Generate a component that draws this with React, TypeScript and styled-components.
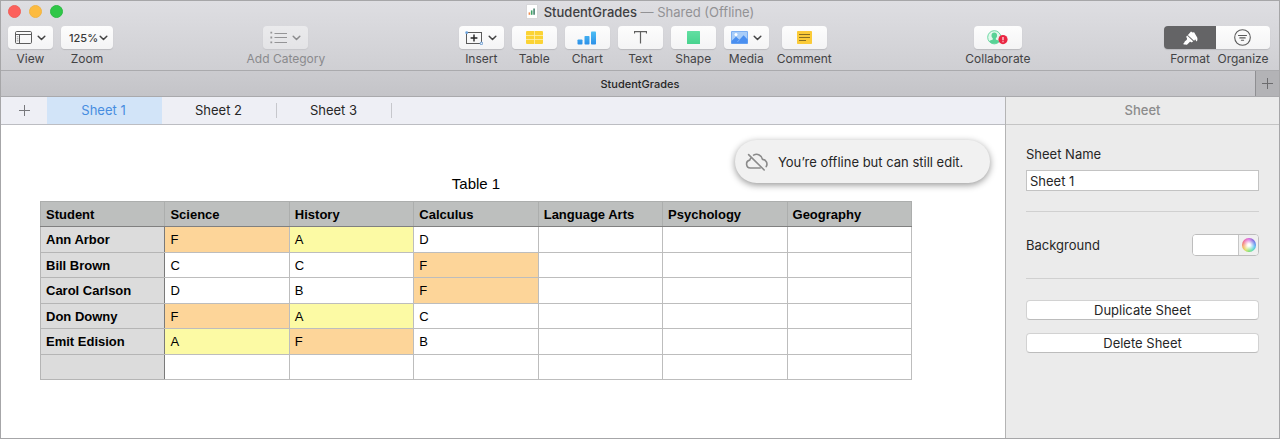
import React from "react";
import styled, { createGlobalStyle } from "styled-components";

const GlobalStyle = createGlobalStyle`
  *, *::before, *::after { box-sizing: border-box; }
  body { margin: 0; background: #fff; }
  button, input, select { font: inherit; color: inherit; margin: 0; }
  button { cursor: pointer; }
`;

const Window = styled.div`
  display: flex;
  flex-direction: column;
  min-height: 100vh;
  border: 1px solid #a6a6a8;
  background: #fff;
  color: #262626;
  font: 13px/16px Inter, "Liberation Sans", sans-serif;
`;

/* ---------- title bar and toolbar ---------- */

const Header = styled.header`
  background: linear-gradient(#dedee2, #cfcfd3);
  border-bottom: 1px solid #aaaaad;
`;

const TitleBar = styled.div`
  display: grid;
  grid-template-columns: 1fr auto 1fr;
  align-items: center;
  height: 21px;
  padding: 0 7px;
`;

const Lights = styled.div`
  display: flex;
  gap: 8px;
`;

const Light = styled.button<{ $color: string; $edge: string }>`
  width: 13px;
  height: 13px;
  padding: 0;
  border: 1px solid ${(p) => p.$edge};
  border-radius: 50%;
  background: ${(p) => p.$color};
`;

const Title = styled.h1`
  display: flex;
  align-items: center;
  gap: 6px;
  margin: 0;
  font-size: 13px;
  font-weight: 500;
  color: #404042;
`;

const TitleStatus = styled.span`
  font-weight: 400;
  color: #929295;
`;

const Toolbar = styled.div`
  display: flex;
  justify-content: space-between;
  padding: 4px 9px 3px 7px;
`;

const ToolGroup = styled.div`
  display: flex;
  gap: 8px;
`;

const ToolItem = styled.div<{ $dim?: boolean }>`
  display: flex;
  flex-direction: column;
  align-items: center;
  gap: 2px;
  opacity: ${(p) => (p.$dim ? 0.5 : 1)};
`;

const ToolButton = styled.button<{ $width?: number }>`
  display: flex;
  align-items: center;
  justify-content: center;
  gap: 5px;
  width: ${(p) => p.$width ?? 45}px;
  height: 23px;
  padding: 0;
  border: 0;
  border-radius: 4px;
  background: linear-gradient(#fdfdfd, #f4f4f5);
  box-shadow: 0 1px 1px rgba(0, 0, 0, 0.12);
`;

const ToolLabel = styled.label`
  font-size: 12px;
  line-height: 16px;
  color: #434345;
  white-space: nowrap;
`;

const ZoomBox = styled.div`
  display: grid;
  grid-template-columns: 1fr 9px;
  align-items: center;
  width: 52px;
  height: 23px;
  padding-right: 5px;
  border-radius: 4px;
  background: linear-gradient(#fdfdfd, #f4f4f5);
  box-shadow: 0 1px 1px rgba(0, 0, 0, 0.12);
`;

const ZoomSelect = styled.select`
  appearance: none;
  grid-area: 1 / 1 / 2 / 3;
  height: 23px;
  padding: 0 0 0 8px;
  border: 0;
  background: transparent;
  font-size: 11px;
  font-weight: 500;
  color: #383838;
`;

const ZoomChevron = styled.span`
  grid-area: 1 / 2;
  display: flex;
  pointer-events: none;
`;

const Segmented = styled.div`
  display: grid;
  grid-template-columns: 52px 54px;
`;

const Segment = styled(ToolButton)<{ $active?: boolean }>`
  width: 100%;
  background: ${(p) => (p.$active ? "#646466" : "linear-gradient(#fdfdfd, #f4f4f5)")};
  border-radius: ${(p) => (p.$active ? "4px 0 0 4px" : "0 4px 4px 0")};
`;

/* ---------- document tabs ---------- */

const DocumentTabs = styled.nav`
  display: flex;
  height: 26px;
  border-bottom: 1px solid #a9a9ac;
  background: linear-gradient(#cbcbcf, #c4c4c8);
`;

const DocumentTab = styled.button`
  flex: 1;
  padding: 0 0 0 24px;
  border: 0;
  background: transparent;
  font-size: 11px;
  font-weight: 500;
  color: #262626;
`;

const AddDocument = styled.button`
  display: flex;
  align-items: center;
  justify-content: center;
  width: 24px;
  padding: 0;
  border: 0;
  border-left: 1px solid #8f8f92;
  background: #b3b3b6;
`;

/* ---------- body ---------- */

const Body = styled.div`
  display: flex;
  flex: 1;
`;

const Main = styled.main`
  flex: 1;
  min-width: 0;
  display: flex;
  flex-direction: column;
`;

const SheetTabs = styled.nav`
  display: flex;
  align-items: stretch;
  height: 28px;
  border-bottom: 1px solid #bcbdc2;
  background: #eeeff5;
`;

const AddSheet = styled.button`
  display: flex;
  align-items: center;
  justify-content: center;
  width: 46px;
  padding: 0;
  border: 0;
  background: transparent;
`;

const SheetTab = styled.button<{ $active?: boolean }>`
  width: 115px;
  padding: 0 2px 1px 0;
  border: 0;
  background: ${(p) => (p.$active ? "#d2e4f8" : "transparent")};
  color: ${(p) => (p.$active ? "#478de0" : "#262626")};
`;

const TabDivider = styled.span`
  align-self: center;
  width: 1px;
  height: 15px;
  margin-left: -1px;
  background: #c6c7cc;
`;

const Canvas = styled.section`
  position: relative;
  flex: 1;
  padding: 49px 93px 16px 39px;
  background: #fff;
  color: #000;
  font-family: "Liberation Sans", Arial, sans-serif;
`;

const Toast = styled.div`
  position: absolute;
  top: 15px;
  right: 15px;
  display: flex;
  align-items: center;
  gap: 9px;
  width: 255px;
  height: 43px;
  padding-left: 10px;
  border-radius: 22px;
  background: #f1f1f1;
  box-shadow: 0 2px 7px rgba(0, 0, 0, 0.42);
  color: #262626;
  font-family: Inter, "Liberation Sans", sans-serif;
  white-space: nowrap;
`;

const Grades = styled.table`
  width: 100%;
  table-layout: fixed;
  border-collapse: collapse;
  line-height: 16px;

  caption {
    padding-bottom: 8px;
    font-size: 15px;
    line-height: 19px;
  }
  tbody tr:nth-child(odd) { height: 26px; }
  tbody tr:nth-child(even) { height: 25px; }
`;

const ColumnHead = styled.th`
  height: 25px;
  padding: 1px 5px 0;
  border: 1px solid #acaead;
  border-bottom-color: #808080;
  background: #bdbfbe;
  text-align: left;
`;

const RowHead = styled.th`
  padding: 1px 5px 0;
  border: 1px solid #b5b5b5;
  border-right-color: #7a7a7a;
  background: #dcdcdc;
  text-align: left;
`;

const fills: Record<string, string> = { F: "#fdd599", A: "#fcfaa4" };

const Cell = styled.td<{ $grade: string }>`
  padding: 1px 5px 0;
  border: 1px solid #bdbdbd;
  background: ${(p) => fills[p.$grade] ?? "#fff"};
`;

/* ---------- inspector ---------- */

const Inspector = styled.aside`
  width: 274px;
  border-left: 1px solid #b4b4b4;
  background: #ebebeb;
`;

const InspectorTitle = styled.h2`
  height: 28px;
  margin: 0;
  border-bottom: 1px solid #c4c4c4;
  font-size: 13px;
  font-weight: 500;
  line-height: 26px;
  text-align: center;
  color: #8c8c8c;
`;

const InspectorBody = styled.div`
  padding: 21px 20px 20px;
`;

const Field = styled.div`
  display: flex;
  flex-direction: column;
  gap: 8px;
  padding-bottom: 20px;
  border-bottom: 1px solid #d0d0d0;
`;

const NameInput = styled.input`
  width: 100%;
  height: 21px;
  padding: 0 3px;
  border: 1px solid #c3c3c3;
  border-radius: 0;
  background: #fff;
`;

const BackgroundRow = styled.div`
  display: flex;
  align-items: center;
  justify-content: space-between;
  padding: 22px 0;
  border-bottom: 1px solid #d0d0d0;
`;

const ColorWell = styled.div`
  display: grid;
  grid-template-columns: 45px 20px;
  height: 22px;
  border: 1px solid #bdbdbd;
  border-radius: 4px;
  background: #fff;
  overflow: hidden;
`;

const ColorInput = styled.input`
  appearance: none;
  width: 100%;
  height: 100%;
  padding: 0;
  border: 0;
  background: #fff;
  &::-webkit-color-swatch-wrapper { padding: 0; }
  &::-webkit-color-swatch { border: 0; }
`;

const WheelButton = styled.button`
  display: grid;
  place-items: center;
  padding: 0;
  border: 0;
  border-left: 1px solid #c6c6c6;
  background: #f0f0f0;
`;

const Wheel = styled.span`
  width: 14px;
  height: 14px;
  border-radius: 50%;
  background:
    radial-gradient(#fff 12%, rgba(255, 255, 255, 0) 72%),
    conic-gradient(#d058d8, #7a55d8, #5078e8, #45b8f0, #4ad8b0, #70dc60, #d8dc50, #f4a850, #f06868, #e85cb0, #d058d8);
`;

const Actions = styled.div`
  display: flex;
  flex-direction: column;
  gap: 13px;
  padding-top: 21px;
`;

const ActionButton = styled.button`
  height: 20px;
  padding: 0;
  border: 1px solid #d2d2d2;
  border-bottom-color: #bcbcbc;
  border-radius: 4px;
  background: #fff;
  line-height: 18px;
`;

/* ---------- icons ---------- */

const Chevron = () => (
  <svg width="9" height="6" viewBox="0 0 9 6" fill="none" stroke="#444" strokeWidth="1.5" strokeLinecap="round" strokeLinejoin="round">
    <path d="M1.2 1.2 4.5 4.5 7.8 1.2" />
  </svg>
);

const Plus = ({ size, color }: { size: number; color: string }) => (
  <svg width={size} height={size} viewBox="0 0 11 11" stroke={color} strokeWidth="1">
    <path d="M5.5 0v11M0 5.5h11" />
  </svg>
);

const DocIcon = () => (
  <svg width="12" height="15" viewBox="0 0 12 15">
    <rect x=".5" y=".5" width="11" height="14" rx="1" fill="#fff" stroke="#c8c8ca" strokeWidth=".6" />
    <path d="M2.6 8.4h1.6v2.4H2.6z" fill="#ee8a4c" />
    <path d="M4.9 6.4h1.6v4.4H4.9z" fill="#3ea568" />
    <path d="M7.2 4.6h1.8v6.2H7.2z" fill="#5b8f7e" />
  </svg>
);

const ViewIcon = () => (
  <svg width="17" height="13" viewBox="0 0 17 13" fill="none" stroke="#5c5c5c" strokeWidth="1">
    <rect x=".5" y=".5" width="16" height="12" rx="1.2" />
    <path d="M.5 3.5h16M4.5 3.5v9" />
    <path d="M1.8 5.8h1.6M1.8 7.8h1.6M1.8 9.8h1.6" strokeWidth=".6" />
  </svg>
);

const CategoryIcon = () => (
  <svg width="17" height="13" viewBox="0 0 17 13" fill="none" stroke="#555" strokeWidth="1">
    <path d="M4.5 2.5H17M4.5 6.5H17M4.5 11.5H17" />
    <path d="M.4.8h1.8v1.8H.4zM.4 5.6h1.8v1.8H.4zM.4 10.4h1.8v1.8H.4z" fill="#555" stroke="none" />
  </svg>
);

const InsertIcon = () => (
  <svg width="18" height="14" viewBox="0 0 18 14" fill="none">
    <rect x="1.5" y="1.5" width="15" height="11" stroke="#5a5a5a" strokeWidth="1" />
    <path d="M9 3.6v6.8M5.6 7h6.8" stroke="#222" strokeWidth="1.4" />
    <circle cx="1.7" cy="1.7" r="1.4" fill="#6aa2dc" />
    <circle cx="16.4" cy="12.4" r="1.3" fill="#e8f2fc" stroke="#5a8fca" strokeWidth=".9" />
  </svg>
);

const TableIcon = () => (
  <svg width="17" height="13" viewBox="0 0 17 13">
    <rect width="17" height="13" rx="1" fill="#fbd334" />
    <path d="M0 4.5h17M0 8.5h17M8.5 0v13" stroke="#fdf0b4" strokeWidth=".8" />
  </svg>
);

const ChartIcon = () => (
  <svg width="20" height="14" viewBox="0 0 20 14">
    <defs>
      <linearGradient id="bars" x1="0" y1="0" x2="0" y2="14" gradientUnits="userSpaceOnUse">
        <stop offset="0" stopColor="#4fc0f4" />
        <stop offset="1" stopColor="#2a8ee8" />
      </linearGradient>
    </defs>
    <g fill="url(#bars)">
      <rect x=".5" y="8.5" width="5" height="5" rx=".8" />
      <rect x="7.5" y="5" width="5" height="8.5" rx=".8" />
      <rect x="14" y=".5" width="5" height="13" rx=".8" />
    </g>
  </svg>
);

const TextIcon = () => (
  <svg width="13" height="13" viewBox="0 0 13 13" fill="none" stroke="#606060" strokeWidth="1.2">
    <path d="M.5 2.5V.6h12v1.9M6.5.6v12" />
  </svg>
);

const ShapeIcon = () => (
  <svg width="13" height="13" viewBox="0 0 13 13">
    <defs>
      <linearGradient id="square" x1="0" y1="0" x2="0" y2="1">
        <stop offset="0" stopColor="#62dfa2" />
        <stop offset="1" stopColor="#48d38e" />
      </linearGradient>
    </defs>
    <rect width="13" height="13" rx=".5" fill="url(#square)" />
  </svg>
);

const MediaIcon = () => (
  <svg width="17" height="13" viewBox="0 0 17 13">
    <rect x=".4" y=".4" width="16.2" height="12.2" rx=".6" fill="#a9cdf8" stroke="#5c9cf0" strokeWidth=".8" />
    <path d="M.5 10 5 5.8l3.4 3 4.2-4.6 4 4.3v4H.5z" fill="#4a8ff0" />
    <path d="m8.4 8.8-2 2.2" stroke="#8dbaf6" strokeWidth=".8" />
    <circle cx="5" cy="3.6" r="1.5" fill="#fff" />
  </svg>
);

const CommentIcon = () => (
  <svg width="15" height="13" viewBox="0 0 15 13">
    <rect width="15" height="13" rx=".8" fill="#fbcb38" />
    <path d="M2 3.5h11M2 6.5h11M2 9.5h7" stroke="#7a6420" strokeWidth=".9" />
  </svg>
);

const CollaborateIcon = () => (
  <svg width="21" height="15" viewBox="0 0 21 15">
    <circle cx="7.3" cy="7.3" r="6.6" fill="#e2f8ec" stroke="#6ad8a2" strokeWidth="1" />
    <path d="M7.3 2.6c1.7 0 2.8 1.2 2.8 3 0 1.3-.6 2.2-1.3 2.9v1c1.5.5 3 1 3.5 2a6.6 6.6 0 0 1-10 0c.5-1 2-1.5 3.5-2v-1c-.7-.7-1.3-1.6-1.3-2.9 0-1.8 1.1-3 2.8-3z" fill="#58d296" />
    <circle cx="16" cy="9.6" r="4.6" fill="#ea2743" />
    <path d="M16 7v3.2M16 11.2v1.1" stroke="#fff" strokeWidth="1.1" />
  </svg>
);

const FormatIcon = () => (
  <svg width="16" height="16" viewBox="0 0 16 16" fill="#fff">
    <path d="M6.4 4.4 9 1.4l1.5 1 1.6-.1 3.1 5.2c.4 1 .3 3-.3 3.7-.5.4-1-.1-1.1-.9-.1-.7-.6-.9-1.1-.4l-.6.8L5.8 5.1z" />
    <path d="m5.100 5.600 6 5.600-1.300 1.300c-.8-.7-1.700-.9-2.300-.3l-2.300 2.300c-.7.6-1.400.1-1.700-.1-.9.2-1.700.2-2-.2-.4-.5.2-1 .8-1.400-.1-.7.2-1.200.7-1.600l1.600-1.300c.7-.6.6-1.700-.5-2.900z" />
  </svg>
);

const OrganizeIcon = () => (
  <svg width="17" height="17" viewBox="0 0 17 17" fill="none" stroke="#5a5a5a" strokeWidth="1.1" strokeLinecap="round">
    <circle cx="8.5" cy="8.5" r="7.8" />
    <path d="M4.5 6.5h8M5.8 8.9h5.4M7.4 11.3h2.2" />
  </svg>
);

const OfflineIcon = () => (
  <svg width="24" height="20" viewBox="0 0 24 20" fill="none" stroke="#8a8a8a" strokeWidth="1.6" strokeLinecap="round" strokeLinejoin="round">
    <path d="M15.2 16H5.4a4 4 0 0 1-.7-7.9c.3-.8.7-1.5 1.3-2.1" />
    <path d="M8.600 3.100a6 6 0 0 1 8.900 4.300 4.700 4.700 0 0 1 3.700 7.200" />
    <path d="m3.600 2.600 15.600 15.400" />
  </svg>
);

/* ---------- data ---------- */

const subjects = ["Science", "History", "Calculus", "Language Arts", "Psychology", "Geography"];

const students = [
  { name: "Ann Arbor", grades: ["F", "A", "D"] },
  { name: "Bill Brown", grades: ["C", "C", "F"] },
  { name: "Carol Carlson", grades: ["D", "B", "F"] },
  { name: "Don Downy", grades: ["F", "A", "C"] },
  { name: "Emit Edision", grades: ["A", "F", "B"] },
  { name: "", grades: [] },
];

interface ToolProps {
  name: string;
  icon: React.ReactNode;
  menu?: boolean;
  dim?: boolean;
  width?: number;
}

const Tool = ({ name, icon, menu, dim, width }: ToolProps) => {
  const id = `tool-${name.toLowerCase().replace(" ", "-")}`;
  return (
    <ToolItem $dim={dim}>
      <ToolButton id={id} type="button" disabled={dim} $width={width} aria-haspopup={menu ? "menu" : undefined}>
        {icon}
        {menu && <Chevron />}
      </ToolButton>
      <ToolLabel htmlFor={id}>{name}</ToolLabel>
    </ToolItem>
  );
};

export default function App() {
  return (
    <>
      <GlobalStyle />
      <Window>
        <Header>
          <TitleBar>
            <Lights>
              <Light type="button" aria-label="Close" $color="#fc605c" $edge="#f0605a" />
              <Light type="button" aria-label="Minimize" $color="#fcbb40" $edge="#f0b445" />
              <Light type="button" aria-label="Full screen" $color="#2fc748" $edge="#2dbb45" />
            </Lights>
            <Title>
              <DocIcon />
              <span>
                StudentGrades <TitleStatus>— Shared (Offline)</TitleStatus>
              </span>
            </Title>
          </TitleBar>
          <Toolbar>
            <ToolGroup>
              <Tool name="View" icon={<ViewIcon />} menu />
              <ToolItem>
                <ZoomBox>
                  <ZoomSelect id="zoom" defaultValue="125%">
                    <option>125%</option>
                  </ZoomSelect>
                  <ZoomChevron>
                    <Chevron />
                  </ZoomChevron>
                </ZoomBox>
                <ToolLabel htmlFor="zoom">Zoom</ToolLabel>
              </ToolItem>
            </ToolGroup>
            <Tool name="Add Category" icon={<CategoryIcon />} menu dim />
            <ToolGroup>
              <Tool name="Insert" icon={<InsertIcon />} menu />
              <Tool name="Table" icon={<TableIcon />} />
              <Tool name="Chart" icon={<ChartIcon />} />
              <Tool name="Text" icon={<TextIcon />} />
              <Tool name="Shape" icon={<ShapeIcon />} />
              <Tool name="Media" icon={<MediaIcon />} menu />
              <Tool name="Comment" icon={<CommentIcon />} />
            </ToolGroup>
            <Tool name="Collaborate" icon={<CollaborateIcon />} width={48} />
            <Segmented>
              <ToolItem>
                <Segment id="format" type="button" $active aria-pressed="true">
                  <FormatIcon />
                </Segment>
                <ToolLabel htmlFor="format">Format</ToolLabel>
              </ToolItem>
              <ToolItem>
                <Segment id="organize" type="button" aria-pressed="false">
                  <OrganizeIcon />
                </Segment>
                <ToolLabel htmlFor="organize">Organize</ToolLabel>
              </ToolItem>
            </Segmented>
          </Toolbar>
        </Header>

        <DocumentTabs>
          <DocumentTab type="button">StudentGrades</DocumentTab>
          <AddDocument type="button" aria-label="New tab">
            <Plus size={11} color="#6c6c6e" />
          </AddDocument>
        </DocumentTabs>

        <Body>
          <Main>
            <SheetTabs>
              <AddSheet type="button" aria-label="Add sheet">
                <Plus size={11} color="#77787c" />
              </AddSheet>
              <SheetTab type="button" $active>Sheet 1</SheetTab>
              <SheetTab type="button">Sheet 2</SheetTab>
              <TabDivider />
              <SheetTab type="button">Sheet 3</SheetTab>
              <TabDivider />
            </SheetTabs>
            <Canvas>
              <Grades>
                <caption>Table 1</caption>
                <thead>
                  <tr>
                    <ColumnHead scope="col">Student</ColumnHead>
                    {subjects.map((s) => (
                      <ColumnHead key={s} scope="col">{s}</ColumnHead>
                    ))}
                  </tr>
                </thead>
                <tbody>
                  {students.map((s, i) => (
                    <tr key={i}>
                      <RowHead scope="row">{s.name}</RowHead>
                      {subjects.map((subject, j) => (
                        <Cell key={subject} $grade={s.grades[j] ?? ""}>{s.grades[j]}</Cell>
                      ))}
                    </tr>
                  ))}
                </tbody>
              </Grades>
              <Toast role="status">
                <OfflineIcon />
                You’re offline but can still edit.
              </Toast>
            </Canvas>
          </Main>

          <Inspector>
            <InspectorTitle>Sheet</InspectorTitle>
            <InspectorBody>
              <Field>
                <label htmlFor="sheet-name">Sheet Name</label>
                <NameInput id="sheet-name" type="text" defaultValue="Sheet 1" />
              </Field>
              <BackgroundRow>
                <label htmlFor="background">Background</label>
                <ColorWell>
                  <ColorInput id="background" type="color" defaultValue="#ffffff" />
                  <WheelButton type="button" aria-label="Show colors">
                    <Wheel />
                  </WheelButton>
                </ColorWell>
              </BackgroundRow>
              <Actions>
                <ActionButton type="button">Duplicate Sheet</ActionButton>
                <ActionButton type="button">Delete Sheet</ActionButton>
              </Actions>
            </InspectorBody>
          </Inspector>
        </Body>
      </Window>
    </>
  );
}
